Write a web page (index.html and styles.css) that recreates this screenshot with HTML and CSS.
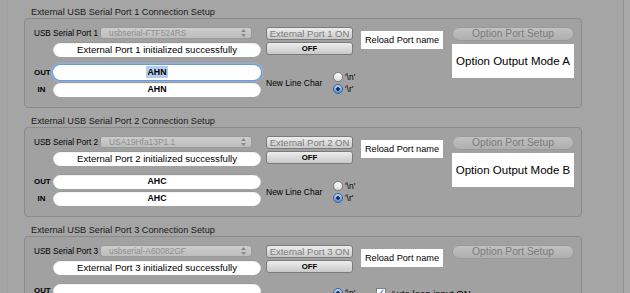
FILE: index.html
```html
<!DOCTYPE html>
<html lang="en">
<head>
    <meta charset="UTF-8">
    <title>External USB Serial Port Setup</title>
    <link rel="stylesheet" href="styles.css">
</head>
<body>
<div class="window">
    <main class="pane">

        <!-- Port 1 -->
        <section class="group">
            <div class="group-title">External USB Serial Port 1 Connection Setup</div>
            <div class="group-box">
                <div class="col col-port">
                    <div class="port-row">
                        <span class="port-label">USB Serial Port 1</span>
                        <div class="popup">
                            <span>usbserial-FTF524RS</span>
                            <svg class="popup-arrows" width="5" height="8" viewBox="0 0 5 8"><path d="M0 3 L2.5 0 L5 3 Z M0 5 L2.5 8 L5 5 Z" fill="#8a8a8a"/></svg>
                        </div>
                    </div>
                    <div class="status">External Port 1 initialized successfully</div>
                    <div class="io-row io-out">
                        <span class="io-label">OUT</span>
                        <div class="field focused"><span class="sel">AHN</span></div>
                    </div>
                    <div class="io-row io-in">
                        <span class="io-label">IN</span>
                        <div class="field">AHN</div>
                    </div>
                </div>
                <div class="col col-switch">
                    <button class="btn btn-on">External Port 1 ON</button>
                    <button class="btn btn-off">OFF</button>
                    <div class="newline">
                        <span class="newline-label">New Line Char</span>
                        <div class="radios">
                            <div class="radio-item"><span class="radio"></span>'\n'</div>
                            <div class="radio-item"><span class="radio checked"></span>'\r'</div>
                        </div>
                    </div>
                </div>
                <div class="col col-reload">
                    <div class="reload">Reload Port name</div>
                </div>
                <div class="col col-option">
                    <div class="option-btn">Option Port Setup</div>
                    <div class="option-mode">Option Output Mode A</div>
                </div>
            </div>
        </section>

        <!-- Port 2 -->
        <section class="group">
            <div class="group-title">External USB Serial Port 2 Connection Setup</div>
            <div class="group-box">
                <div class="col col-port">
                    <div class="port-row">
                        <span class="port-label">USB Serial Port 2</span>
                        <div class="popup">
                            <span>USA19Hfa13P1.1</span>
                            <svg class="popup-arrows" width="5" height="8" viewBox="0 0 5 8"><path d="M0 3 L2.5 0 L5 3 Z M0 5 L2.5 8 L5 5 Z" fill="#8a8a8a"/></svg>
                        </div>
                    </div>
                    <div class="status">External Port 2 initialized successfully</div>
                    <div class="io-row io-out">
                        <span class="io-label">OUT</span>
                        <div class="field">AHC</div>
                    </div>
                    <div class="io-row io-in">
                        <span class="io-label">IN</span>
                        <div class="field">AHC</div>
                    </div>
                </div>
                <div class="col col-switch">
                    <button class="btn btn-on">External Port 2 ON</button>
                    <button class="btn btn-off">OFF</button>
                    <div class="newline">
                        <span class="newline-label">New Line Char</span>
                        <div class="radios">
                            <div class="radio-item"><span class="radio"></span>'\n'</div>
                            <div class="radio-item"><span class="radio checked"></span>'\r'</div>
                        </div>
                    </div>
                </div>
                <div class="col col-reload">
                    <div class="reload">Reload Port name</div>
                </div>
                <div class="col col-option">
                    <div class="option-btn">Option Port Setup</div>
                    <div class="option-mode">Option Output Mode B</div>
                </div>
            </div>
        </section>

        <!-- Port 3 -->
        <section class="group">
            <div class="group-title">External USB Serial Port 3 Connection Setup</div>
            <div class="group-box">
                <div class="col col-port">
                    <div class="port-row">
                        <span class="port-label">USB Serial Port 3</span>
                        <div class="popup">
                            <span>usbserial-A60082GF</span>
                            <svg class="popup-arrows" width="5" height="8" viewBox="0 0 5 8"><path d="M0 3 L2.5 0 L5 3 Z M0 5 L2.5 8 L5 5 Z" fill="#8a8a8a"/></svg>
                        </div>
                    </div>
                    <div class="status">External Port 3 initialized successfully</div>
                    <div class="io-row io-out">
                        <span class="io-label">OUT</span>
                        <div class="field"></div>
                    </div>
                    <div class="io-row io-in">
                        <span class="io-label">IN</span>
                        <div class="field"></div>
                    </div>
                </div>
                <div class="col col-switch">
                    <button class="btn btn-on">External Port 3 ON</button>
                    <button class="btn btn-off">OFF</button>
                    <div class="newline newline-3">
                        <span class="newline-label">New Line Char</span>
                        <div class="radios">
                            <div class="radio-item">
                                <span class="radio checked"></span>'\n'
                                <span class="check-item"><span class="checkbox">&#10003;</span>Auto loop input ON</span>
                            </div>
                            <div class="radio-item"><span class="radio"></span>'\r'</div>
                        </div>
                    </div>
                </div>
                <div class="col col-reload">
                    <div class="reload">Reload Port name</div>
                </div>
                <div class="col col-option">
                    <div class="option-btn">Option Port Setup</div>
                </div>
            </div>
        </section>

    </main>
    <div class="edge"></div>
</div>
</body>
</html>
```

FILE: styles.css
```css
body {
    margin: 0;
    background-color: #a5a5a5;
    font-family: "Liberation Sans", Arial, sans-serif;
    font-size: 8px;
    color: #111;
}
.window {
    display: flex;
    height: 293px;
    overflow: hidden;
}
.pane {
    flex: 1;
    margin-left: 7px;
    padding: 6px 0 0 16px;
    border-left: 1px solid #a0a0a0;
}
.edge {
    width: 6px;
    border-left: 1px solid #939393;
    background-color: #a9a9a9;
}

/* Group boxes */
.group + .group {
    margin-top: 7px;
}
.group-title {
    height: 12px;
    line-height: 12px;
    padding-left: 7px;
    font-size: 9.2px;
    color: #1a1a1a;
}
.group-box {
    box-sizing: border-box;
    width: 558px;
    height: 90px;
    border: 1px solid #8b8b8b;
    border-radius: 4px;
    background-color: #a1a1a1;
    padding: 8px 0 0 9px;
    display: flex;
    align-items: flex-start;
}
.col {
    display: flex;
    flex-direction: column;
}

/* Port column */
.col-port {
    width: 227px;
}
.port-row {
    display: flex;
    align-items: center;
    height: 12px;
}
.port-label {
    width: 66px;
    flex-shrink: 0;
    font-size: 8.2px;
    color: #000;
    white-space: nowrap;
}
.popup {
    box-sizing: border-box;
    width: 152px;
    height: 12px;
    border: 1px solid #9a9a9a;
    border-radius: 3px;
    background: linear-gradient(#cdcdcd, #bdbdbd);
    display: flex;
    align-items: center;
    justify-content: space-between;
    padding: 0 5px 0 8px;
    color: #8f8f8f;
    font-size: 8.4px;
}
.status {
    margin: 3px 0 0 19px;
    width: 208px;
    height: 15px;
    line-height: 15px;
    border-radius: 8px;
    background-color: #fff;
    box-shadow: inset 0 1px 1px rgba(0, 0, 0, 0.45);
    text-align: center;
    font-size: 9.6px;
    color: #000;
}
.io-row {
    display: flex;
    align-items: center;
}
.io-out {
    margin-top: 8px;
}
.io-in {
    margin-top: 2px;
}
.io-label {
    width: 15px;
    flex-shrink: 0;
    margin-right: 4px;
    text-align: center;
    font-size: 7.9px;
    font-weight: bold;
    color: #000;
}
.field {
    width: 208px;
    height: 15px;
    line-height: 15px;
    border-radius: 8px;
    background-color: #fff;
    box-shadow: inset 0 1px 1px rgba(0, 0, 0, 0.45);
    text-align: center;
    font-size: 8.8px;
    font-weight: bold;
    color: #000;
}
.field.focused {
    box-shadow: 0 0 0 1px #6b9bd8, 0 0 2px 2px #8fb5e6;
}
.sel {
    background-color: #b4cdee;
    padding: 1px 1px;
}

/* ON / OFF column */
.col-switch {
    width: 87px;
    margin-left: 5px;
}
.btn {
    box-sizing: border-box;
    width: 87px;
    height: 13px;
    padding: 0;
    border: 1px solid #7b7b7b;
    border-radius: 3px;
    background: linear-gradient(#ededed, #c9c9c9);
    font-family: inherit;
    line-height: 11px;
}
.btn-on {
    font-size: 9.5px;
    color: #7a7a7a;
}
.btn-off {
    margin-top: 2px;
    font-size: 7.8px;
    font-weight: bold;
    color: #000;
}
.newline {
    display: flex;
    align-items: center;
    margin-top: 16px;
    white-space: nowrap;
}
.newline-label {
    width: 67px;
    flex-shrink: 0;
    font-size: 8.5px;
    color: #000;
}
.radio-item {
    display: flex;
    align-items: center;
    height: 12px;
    font-size: 8.5px;
    color: #000;
}
.radio {
    box-sizing: border-box;
    width: 10px;
    height: 10px;
    margin-right: 2px;
    border: 1px solid #7f7f7f;
    border-radius: 50%;
    background: linear-gradient(#fdfdfd, #dcdcdc);
}
.radio.checked {
    border-color: #3b5f99;
    background: radial-gradient(circle, #1a2a44 0 1.5px, transparent 2px),
                linear-gradient(#b9d4f5, #4d8ee0);
}
.newline-3 {
    margin-top: 14px;
}
.check-item {
    display: flex;
    align-items: center;
    margin-left: 21px;
    font-size: 9.5px;
}
.checkbox {
    box-sizing: border-box;
    width: 10px;
    height: 10px;
    margin-right: 4px;
    border: 1px solid #7f7f7f;
    background-color: #fff;
    color: #2a4f9a;
    font-size: 10px;
    line-height: 8px;
    text-align: center;
}

/* Reload */
.col-reload {
    margin-left: 8px;
}
.reload {
    margin-top: 4px;
    width: 82px;
    height: 18px;
    line-height: 18px;
    background-color: #fff;
    text-align: center;
    font-size: 9.2px;
    color: #000;
}

/* Option column */
.col-option {
    width: 122px;
    margin-left: 9px;
}
.option-btn {
    height: 14px;
    line-height: 14px;
    border-radius: 7px;
    background: linear-gradient(#c3c3c3, #adadad);
    box-shadow: inset 0 0 0 1px #9a9a9a;
    text-align: center;
    font-size: 10.3px;
    color: #7b7b7b;
}
.option-mode {
    margin-top: 3px;
    height: 34px;
    line-height: 34px;
    background-color: #fff;
    text-align: center;
    font-size: 11.5px;
    color: #000;
    white-space: nowrap;
}
```
